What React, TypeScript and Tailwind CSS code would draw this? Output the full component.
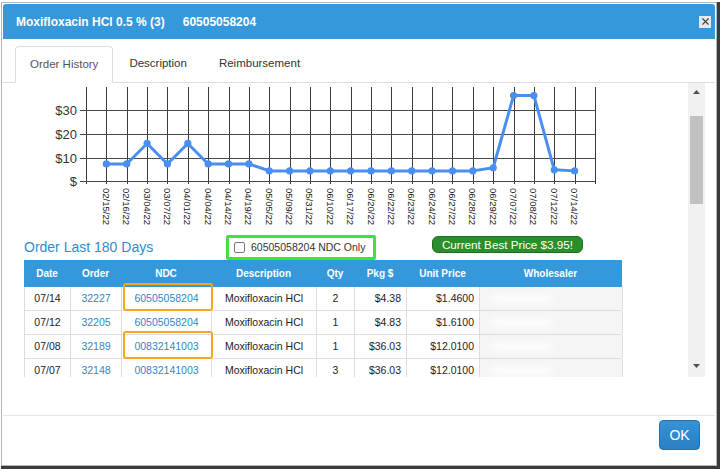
import {X} from "lucide-react"

const DATES = [
    "02/15/22", "02/16/22", "03/04/22", "03/07/22", "04/01/22", "04/04/22",
    "04/14/22", "04/19/22", "05/05/22", "05/09/22", "05/31/22", "06/10/22",
    "06/17/22", "06/20/22", "06/22/22", "06/23/22", "06/24/22", "06/27/22",
    "06/28/22", "06/29/22", "07/07/22", "07/08/22", "07/12/22", "07/14/22",
]

const PRICES = [
    7.29, 7.29, 15.9, 7.29, 15.9, 7.29, 7.29, 7.29, 4.38, 4.38, 4.38, 4.38,
    4.38, 4.38, 4.38, 4.38, 4.38, 4.38, 4.38, 5.7, 36.03, 36.03, 4.83, 4.38,
]

const ORDERS = [
    {date: "07/14", order: "32227", ndc: "60505058204", qty: "2", pkg: "$4.38", unit: "$1.4600", marked: true},
    {date: "07/12", order: "32205", ndc: "60505058204", qty: "1", pkg: "$4.83", unit: "$1.6100", marked: false},
    {date: "07/08", order: "32189", ndc: "00832141003", qty: "1", pkg: "$36.03", unit: "$12.0100", marked: true},
    {date: "07/07", order: "32148", ndc: "00832141003", qty: "3", pkg: "$36.03", unit: "$12.0100", marked: false},
]

const X0 = 71
const STEP = 20.36
const Y0 = 98.3
const PER_DOLLAR = 2.38

const COLS = "grid grid-cols-[46px_51px_90px_105px_38px_52px_73px_143px]"

function PriceChart() {
    const gridX = Array.from({length: 26}, (_, k) => Math.round(X0 + k * STEP) + 0.5)
    const points = PRICES.map((price, index) => [X0 + (index + 1) * STEP, Y0 - price * PER_DOLLAR])

    return (
        <svg width={673} height={148} className="block">
            {gridX.map(x => (
                <line key={x} x1={x} x2={x} y1={4} y2={101} stroke="#3a3a3a" strokeWidth={1}/>
            ))}
            {[0, 10, 20, 30].map(value => {
                const y = Math.round(Y0 - value * PER_DOLLAR) + 0.5
                return (
                    <g key={value}>
                        <line x1={65} x2={580} y1={y} y2={y} stroke="#4a4a4a" strokeWidth={1.2}/>
                        <text
                            x={62}
                            y={y}
                            textAnchor="end"
                            dominantBaseline="central"
                            fontSize={13}
                            fill="#333"
                        >
                            {value === 0 ? "$" : `$${value}`}
                        </text>
                    </g>
                )
            })}
            <polyline
                points={points.map(p => p.join(",")).join(" ")}
                fill="none"
                stroke="#4a8ff0"
                strokeWidth={3}
                strokeLinejoin="round"
            />
            {points.map(([x, y], index) => (
                <circle key={index} cx={x} cy={y} r={3.6} fill="#4a8ff0"/>
            ))}
            {DATES.map((date, index) => (
                <text
                    key={date}
                    transform={`translate(${X0 + (index + 1) * STEP} 105) rotate(90)`}
                    dominantBaseline="central"
                    fontSize={9.5}
                    fill="#222"
                >
                    {date}
                </text>
            ))}
        </svg>
    )
}

function Scrollbar() {
    return (
        <div className="relative w-[17px] shrink-0 bg-[#f1f1f1]">
            <svg width={17} height={17} className="block">
                <path d="M5 11 L8.5 7 L12 11 Z" fill="#505050"/>
            </svg>
            <div className="absolute left-[2px] top-[33px] h-[88px] w-[13px] bg-[#c1c1c1]"/>
            <svg width={17} height={17} className="absolute bottom-[2px] left-0">
                <path d="M5 6 L12 6 L8.5 10 Z" fill="#505050"/>
            </svg>
        </div>
    )
}

function OrderTable() {
    const headers = ["Date", "Order", "NDC", "Description", "Qty", "Pkg $", "Unit Price", "Wholesaler"]

    return (
        <div className="ml-[9px] w-[598px]">
            <div className={`${COLS} h-[27px] bg-[#3498db] text-[10px] font-bold text-white`}>
                {headers.map(header => (
                    <div key={header} className="flex items-center justify-center">
                        {header}
                    </div>
                ))}
            </div>

            {ORDERS.map(row => (
                <div
                    key={row.order}
                    className={`${COLS} h-[24px] border-b border-l border-[#dddddd] bg-white text-[10.5px] text-[#222]`}
                >
                    <div className="flex items-center justify-center border-r border-[#dddddd]">{row.date}</div>
                    <div className="flex items-center justify-center border-r border-[#dddddd] text-[#2f86d0]">
                        {row.order}
                    </div>
                    <div className="relative flex items-center justify-center border-r border-[#dddddd] text-[#2f86d0]">
                        {row.ndc}
                        {row.marked && (
                            <div className="absolute -bottom-px -right-[2px] -top-[4px] left-px z-10 rounded-[3px] border-2 border-[#f5a623]"/>
                        )}
                    </div>
                    <div className="flex items-center justify-center border-r border-[#dddddd]">Moxifloxacin HCl</div>
                    <div className="flex items-center justify-center border-r border-[#dddddd]">{row.qty}</div>
                    <div className="flex items-center justify-end border-r border-[#dddddd] pr-[5px]">{row.pkg}</div>
                    <div className="flex items-center justify-end border-r border-[#dddddd] pr-[5px]">{row.unit}</div>
                    <div className="flex items-center border-r border-[#dddddd] bg-[#f5f5f5] pl-[10px]">
                        <div className="h-[9px] w-[64px] rounded-full bg-white/70 blur-[3px]"/>
                    </div>
                </div>
            ))}
        </div>
    )
}

export default function App() {
    return (
        <div className="h-[469px] w-[720px] overflow-hidden bg-white pl-px pt-[2px] font-['Liberation_Sans',Arial,sans-serif]">
            <div className="h-[467px] w-[719px] border-b-[3px] border-r-[3px] border-[#3b3b3b]">
                <div className="flex h-[464px] w-[716px] flex-col border border-[#b5b5b5] bg-white p-px">
                    <div className="flex h-[35px] shrink-0 items-center rounded-t-[3px] bg-[#3498db] pl-[13px] pr-[4px] text-[12px] font-bold text-white">
                        <span>Moxifloxacin HCl 0.5 % (3)</span>
                        <span className="ml-[18px]">60505058204</span>
                        <div className="ml-auto flex h-[12px] w-[12px] items-center justify-center bg-[#e8e8e8] text-[#444]">
                            <X size={11} strokeWidth={2.5}/>
                        </div>
                    </div>

                    <div className="mt-[7px] flex h-[37px] shrink-0 border-b border-[#dddddd] pl-[12px] pr-[10px] text-[11.5px]">
                        <div className="-mb-px flex items-center rounded-t-[4px] border border-b-white border-[#dddddd] bg-white px-[14px] text-[#555]">
                            Order History
                        </div>
                        <div className="flex items-center px-[16px] text-[#333]">Description</div>
                        <div className="flex items-center px-[16px] text-[#333]">Reimbursement</div>
                    </div>

                    <div className="flex h-[294px] shrink-0 pl-[12px] pr-[10px]">
                        <div className="flex-1 overflow-hidden">
                            <PriceChart/>

                            <div className="flex h-[29px]">
                                <div className="w-[211px] pl-[9px] pt-[7px] text-[14px] leading-[18px] text-[#2d8cd4]">
                                    Order Last 180 Days
                                </div>
                                <div className="mt-[4px] flex h-[25px] w-[150px] items-center gap-[6px] rounded-[2px] border-[3px] border-[#3be33b] pl-[5px] text-[10.5px] text-[#333]">
                                    <span className="h-[11px] w-[11px] rounded-[2px] border border-[#767676] bg-white"/>
                                    60505058204 NDC Only
                                </div>
                                <div className="ml-[56px] mt-[5px] flex h-[17px] w-[151px] items-center justify-center rounded-[6px] border border-[#1d6f1d] bg-[#2a8f2a] text-[11.7px] text-white">
                                    Current Best Price $3.95!
                                </div>
                            </div>

                            <OrderTable/>
                        </div>
                        <Scrollbar/>
                    </div>

                    <div className="mt-[38px] flex flex-1 border-t border-[#e5e5e5] pr-[15px] pt-[4px]">
                        <button
                            type="button"
                            className="ml-auto flex h-[30px] w-[41px] items-center justify-center rounded-[4px] border border-[#2471b0] bg-gradient-to-b from-[#3592d8] to-[#2b7fc2] text-[14px] text-white"
                        >
                            OK
                        </button>
                    </div>
                </div>
            </div>
        </div>
    )
}
